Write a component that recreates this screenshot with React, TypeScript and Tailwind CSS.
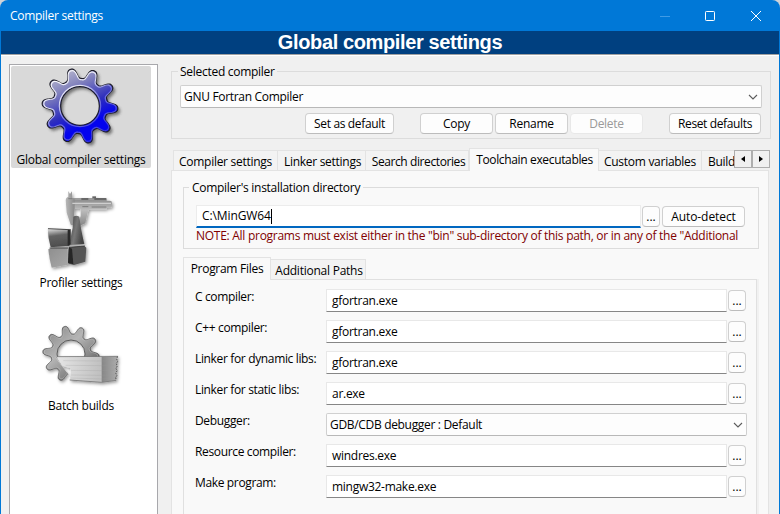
import type { ReactNode } from 'react';

function gearPath(cx: number, cy: number, inner: number, outer: number, startDeg: number, teeth = 10) {
  const mid = (inner + outer) / 2;
  const amp = (outer - inner) / 2;
  const points: string[] = [];
  for (let i = 0; i < 360; i += 1) {
    const wave = Math.cos(((i - startDeg) * teeth * Math.PI) / 180);
    const r = mid + (amp * Math.tanh(1.6 * (wave - 0.18))) / Math.tanh(1.4);
    const a = (i * Math.PI) / 180;
    points.push(`${(cx + r * Math.sin(a)).toFixed(1)} ${(cy - r * Math.cos(a)).toFixed(1)}`);
  }
  return `M${points.join('L')}Z`;
}

function circlePath(cx: number, cy: number, r: number) {
  return `M${cx - r} ${cy}a${r} ${r} 0 1 0 ${2 * r} 0a${r} ${r} 0 1 0 ${-2 * r} 0Z`;
}

function BlueGear() {
  const gear = gearPath(165, 138, 84, 114, -14) + circlePath(165, 138, 58);
  const bevel = gearPath(165, 138, 80, 109, -14) + circlePath(165, 138, 62);
  return (
    <svg className="h-[82px] w-[84px]" viewBox="42 18 252 246">
      <defs>
        <linearGradient id="blue" x1="0.2" y1="0.05" x2="0.62" y2="0.9">
          <stop offset="0" stopColor="#b9b9cf" />
          <stop offset="0.25" stopColor="#8585bd" />
          <stop offset="0.6" stopColor="#2e2ebd" />
          <stop offset="0.85" stopColor="#0303ee" />
        </linearGradient>
        <linearGradient id="bevel" x1="0.15" y1="0" x2="0.75" y2="0.9">
          <stop offset="0" stopColor="#ffffff" />
          <stop offset="0.35" stopColor="#e4e4f4" />
          <stop offset="0.6" stopColor="#7878dc" />
          <stop offset="1" stopColor="#3a3ad8" />
        </linearGradient>
        <filter id="soft" x="-10%" y="-10%" width="125%" height="125%">
          <feGaussianBlur stdDeviation="4" />
        </filter>
      </defs>
      <path d={gear} transform="translate(7 8)" fill="#333" opacity="0.6" fillRule="evenodd" filter="url(#soft)" />
      <path d={gear} fill="url(#blue)" stroke="#1d1d28" strokeWidth="3.5" fillRule="evenodd" />
      <path d={bevel} fill="none" stroke="url(#bevel)" strokeWidth="3.5" />
    </svg>
  );
}

function Caliper() {
  return (
    <svg className="h-[90px] w-[90px]" viewBox="3 15 270 270">
      <defs>
        <linearGradient id="steel" x1="0" y1="0" x2="0" y2="1">
          <stop offset="0" stopColor="#8c8c8c" />
          <stop offset="0.4" stopColor="#bdbdbd" />
          <stop offset="1" stopColor="#858585" />
        </linearGradient>
        <linearGradient id="jaw" x1="0" y1="0" x2="1" y2="0">
          <stop offset="0" stopColor="#b8b8b8" />
          <stop offset="1" stopColor="#7a7a7a" />
        </linearGradient>
        <linearGradient id="cubeTop" x1="0.2" y1="0" x2="0.35" y2="1">
          <stop offset="0" stopColor="#e4e4e4" />
          <stop offset="0.4" stopColor="#636363" />
          <stop offset="1" stopColor="#4c4c4c" />
        </linearGradient>
        <linearGradient id="cubeLow" x1="0" y1="0" x2="1" y2="1">
          <stop offset="0" stopColor="#8e8e8e" />
          <stop offset="1" stopColor="#a8a8a8" />
        </linearGradient>
        <linearGradient id="wedge" x1="0" y1="0" x2="1" y2="0.4">
          <stop offset="0" stopColor="#444" />
          <stop offset="0.5" stopColor="#777" />
          <stop offset="1" stopColor="#444" />
        </linearGradient>
        <filter id="shade" x="-15%" y="-15%" width="140%" height="140%">
          <feDropShadow dx="4" dy="5" stdDeviation="4" floodColor="#000" floodOpacity="0.4" />
        </filter>
      </defs>
      <g filter="url(#shade)">
        <path d="M112 58H215V62H225Q231 62 231 69V77Q231 83 225 83H214V88H161L157 102L151 130L133 138L128 134L137 108V86H112Z" fill="url(#steel)" />
        <path d="M100 33l5 9 6-8v24h8v27l-2 22 11 26-6 5-15-4-12-36-3-38q0-8 8-10Z" fill="url(#jaw)" />
        <path d="M100 56h114" stroke="#777" strokeWidth="2.5" />
        <path d="M139 57h21M178 57h36" stroke="#5a5a5a" strokeWidth="4" />
        <path d="M112 70h116" stroke="#cfcfcf" strokeWidth="4" />
        <path d="M142 80h18M170 81h44" stroke="#7a7a7a" strokeWidth="3" fill="none" />
        <path d="M172 49h11v6h-11Z" fill="#666" />
        <path d="M115 110q9-5 18 0 4 36 15 82l-43 3q2-28 8-52Z" fill="url(#wedge)" />
        <path d="M38 145l65 3 1 49-57 5Q39 177 38 145Z" fill="url(#cubeTop)" />
        <path d="M98 151l9-4v46l-9 5Z" fill="#292929" />
        <path d="M40 208l8-4 50-1 1 51-49 9q-7-23-10-55Z" fill="url(#cubeLow)" />
        <path d="M102 202l46-4 6 5-3 42-34 10-17-4Z" fill="#555" />
        <path d="M101 202l10 4 4 47-16-5Z" fill="#252525" />
        <path d="M39 146l65 3M44 204h55M102 202l48-4" stroke="#333" strokeWidth="2.5" fill="none" />
      </g>
    </svg>
  );
}

function BatchGear() {
  const gear = gearPath(108, 117, 61, 85, -13) + circlePath(108, 117, 42);
  return (
    <svg className="h-[75px] w-[90px]" viewBox="3 15 270 225">
      <defs>
        <linearGradient id="grayGear" x1="0.1" y1="0.1" x2="0.8" y2="0.9">
          <stop offset="0" stopColor="#8d8d8d" />
          <stop offset="0.4" stopColor="#b5b5b5" />
          <stop offset="0.75" stopColor="#858585" />
          <stop offset="1" stopColor="#555" />
        </linearGradient>
        <linearGradient id="paper" x1="0" y1="0" x2="1" y2="0.1">
          <stop offset="0" stopColor="#e6e6e6" />
          <stop offset="1" stopColor="#c0c0c0" />
        </linearGradient>
        <linearGradient id="side" x1="0" y1="0" x2="1" y2="0">
          <stop offset="0" stopColor="#868686" />
          <stop offset="1" stopColor="#adadad" />
        </linearGradient>
        <clipPath id="gearClip">
          <path d="M0 0H273V126H60L78 150L108 188V240H0Z" />
        </clipPath>
        <filter id="shadow" x="-15%" y="-15%" width="140%" height="140%">
          <feDropShadow dx="4" dy="5" stdDeviation="4" floodColor="#000" floodOpacity="0.4" />
        </filter>
      </defs>
      <g filter="url(#shadow)">
        <g clipPath="url(#gearClip)">
          <path d={gear} fill="url(#grayGear)" stroke="#4b4b4b" strokeWidth="2.5" fillRule="evenodd" />
          <path d={gearPath(108, 117, 57, 80, -13)} fill="none" stroke="#cfcfcf" strokeWidth="2" opacity="0.6" />
        </g>
        <path d="M66 125H202V202L104 194L107 174V160L83 152Z" fill="url(#paper)" />
        <path d="M200 125L248 124L245 132L248 139L244 146L247 153L243 160L247 167L242 174L246 181L242 188L244 195L200 202Z" fill="url(#side)" />
        <path d="M66 125L248 124M104 195L200 202L244 196" fill="none" stroke="#777" strokeWidth="2.5" />
        <path d="M85 137L200 138L245 137M92 151L200 152L245 151M108 166L200 167L245 165M108 180L200 181L244 179M108 189L200 192L242 188" fill="none" stroke="#999" strokeWidth="1.8" opacity="0.4" />
        <path d="M248 124L245 132L248 139L244 146L247 153L243 160L247 167L242 174L246 181L242 188L244 195" fill="none" stroke="#505050" strokeWidth="3" strokeDasharray="5 3" />
      </g>
    </svg>
  );
}

function Chevron() {
  return (
    <svg className="h-[6px] w-[10px]" viewBox="0 0 10 6" fill="none">
      <path d="M1 1l4 4 4-4" stroke="#5c5c5c" strokeWidth="1.1" />
    </svg>
  );
}

function Button({ className, children }: { className: string; children: ReactNode }) {
  return (
    <button
      className={`flex shrink-0 items-center justify-center whitespace-nowrap rounded-[4px] border border-[#d0d0d0] border-b-[#bcbcbc] bg-[#fdfdfd] ${className}`}
    >
      {children}
    </button>
  );
}

function Combo({ value, className }: { value: string; className: string }) {
  return (
    <div
      className={`flex items-center justify-between rounded-[2px] border border-[#d0d0d0] border-b-[#b8b8b8] bg-[#fdfdfd] pl-[3px] pr-[3px] ${className}`}
    >
      <span>{value}</span>
      <Chevron />
    </div>
  );
}

function Tab({ className, children }: { className: string; children: ReactNode }) {
  return (
    <div
      className={`flex shrink-0 items-center justify-center overflow-hidden whitespace-nowrap border-r border-t border-[#e3e3e3] ${className}`}
    >
      {children}
    </div>
  );
}

const programs = [
  { label: 'C compiler:', value: 'gfortran.exe' },
  { label: 'C++ compiler:', value: 'gfortran.exe' },
  { label: 'Linker for dynamic libs:', value: 'gfortran.exe' },
  { label: 'Linker for static libs:', value: 'ar.exe' },
  { label: 'Debugger:', value: 'GDB/CDB debugger : Default', combo: true },
  { label: 'Resource compiler:', value: 'windres.exe' },
  { label: 'Make program:', value: 'mingw32-make.exe' },
];

export default function App() {
  return (
    <div className="h-[514px] w-[780px] overflow-hidden bg-[#cfd3d8]">
      <div className="flex h-full flex-col overflow-hidden rounded-t-[8px] bg-[#0078d7] px-px font-['Open_Sans','Noto_Sans',sans-serif] text-[12px] leading-4 tracking-[-0.28px] text-black">
        <div className="flex h-[31px] shrink-0 items-center justify-between pl-[9px] pr-[17px] text-white">
          <span className="pt-px">Compiler settings</span>
          <div className="flex items-center">
            <svg className="h-[12px] w-[12px]" viewBox="0 0 12 12">
              <path d="M1 6.5h10" stroke="#3f9be6" />
            </svg>
            <svg className="ml-[33px] h-[12px] w-[12px]" viewBox="0 0 12 12" fill="none">
              <rect x="1.5" y="1.5" width="9" height="9" rx="0.8" stroke="#fff" />
            </svg>
            <svg className="ml-[34px] h-[12px] w-[12px]" viewBox="0 0 12 12">
              <path d="M1 1l10 10M11 1L1 11" stroke="#fff" />
            </svg>
          </div>
        </div>
        <div className="flex h-[23px] shrink-0 items-center justify-center bg-[#004080] font-['Liberation_Sans',Arial,sans-serif] text-[20px] font-bold leading-[23px] tracking-[-0.38px] text-white">
          Global compiler settings
        </div>
        <div className="flex min-h-0 flex-1 border-t border-[#a0a0a0] bg-[#f0f0f0] shadow-[inset_0_1px_0_#fff]">
          <div className="ml-2 mt-[9px] flex w-[149px] shrink-0 flex-col border border-b-0 border-[#a8a8ac] bg-white pl-px pt-px">
            <div className="flex h-[102px] w-[140px] flex-col items-center rounded-[2px] bg-[#d9d9d9] tracking-[-0.25px]">
              <BlueGear />
              <span className="mt-[4px] whitespace-nowrap">Global compiler settings</span>
            </div>
            <div className="mt-[17px] flex w-[140px] flex-col items-center">
              <Caliper />
              <span>Profiler settings</span>
            </div>
            <div className="mt-[29px] flex w-[140px] flex-col items-center tracking-[-0.23px]">
              <BatchGear />
              <span className="mt-[3px]">Batch builds</span>
            </div>
          </div>

          <div className="ml-[13px] mr-[9px] mt-[8px] flex min-w-0 flex-1 flex-col">
            <fieldset className="h-[76px] border border-[#dcdcdc] px-[8px]">
              <legend className="-ml-[2px] px-[2px] pt-px">Selected compiler</legend>
              <Combo className="mt-[5px] h-[23px] w-[582px] tracking-[-0.31px]" value="GNU Fortran Compiler" />
              <div className="mt-[5px] flex pl-[125px]">
                <Button className="h-[21px] w-[89px] tracking-[-0.34px]">Set as default</Button>
                <Button className="ml-[26px] h-[21px] w-[73px]">Copy</Button>
                <Button className="ml-[2px] h-[21px] w-[73px]">Rename</Button>
                <Button className="ml-[2px] h-[21px] w-[73px] border-[#e8e8e8] border-b-[#e8e8e8] bg-[#f8f8f8] text-[#9a9a9a]">
                  Delete
                </Button>
                <Button className="ml-[26px] h-[21px] w-[92px] tracking-[-0.37px]">Reset defaults</Button>
              </div>
            </fieldset>

            <div className="mt-[9px] flex h-[22px] shrink-0 items-end pl-[2px]">
              <Tab className="h-[20px] w-[105px] border-l bg-[#f3f3f3] pt-[2px]">Compiler settings</Tab>
              <Tab className="h-[20px] w-[88px] bg-[#f3f3f3] pl-[2px] pt-[2px]">Linker settings</Tab>
              <Tab className="h-[20px] w-[103px] bg-[#f3f3f3] pl-[3px] pt-[2px] tracking-[-0.4px]">Search directories</Tab>
              <Tab className="z-10 -mb-px h-[23px] w-[130px] border-l bg-[#f9f9f9] pb-[2px] pl-px pt-px tracking-[-0.35px]">
                Toolchain executables
              </Tab>
              <Tab className="h-[20px] w-[103px] bg-[#f3f3f3] pt-[2px]">Custom variables</Tab>
              <Tab className="h-[20px] w-[32px] justify-start border-r-0 bg-[#f3f3f3] pl-[6px] pt-[2px]"><span>Build</span></Tab>
              <div className="flex h-[20px] items-start">
                <div className="flex h-[18px] w-[18px] items-center justify-center border border-[#adadad] bg-[#f0f0f0]">
                  <svg className="h-[6px] w-[4px]" viewBox="0 0 4 6">
                    <path d="M4 0v6L0 3Z" />
                  </svg>
                </div>
                <div className="flex h-[18px] w-[18px] items-center justify-center border border-[#adadad] bg-[#f0f0f0]">
                  <svg className="h-[6px] w-[4px]" viewBox="0 0 4 6">
                    <path d="M0 0v6l4-3Z" />
                  </svg>
                </div>
              </div>
            </div>

            <div className="mr-px flex min-h-0 flex-1 flex-col border border-b-0 border-[#e3e3e3] bg-[#f9f9f9] pl-[11px] pr-[9px]">
              <fieldset className="mt-[8px] h-[70px] shrink-0 border border-[#dcdcdc] pl-[12px] pr-[13px]">
                <legend className="-ml-[7px] px-[3px] pt-px">Compiler's installation directory</legend>
                <div className="mt-[9px] flex items-center">
                  <div className="flex h-[23px] w-[445px] shrink-0 items-center border border-b-2 border-[#ececec] border-b-[#0067c0] bg-white pl-[5px] tracking-[-0.1px]">
                    <span>C:\MinGW64</span>
                    <span className="h-[15px] w-px bg-black" />
                  </div>
                  <Button className="ml-px h-[21px] w-[18px] tracking-normal">...</Button>
                  <Button className="ml-[2px] h-[21px] w-[83px] tracking-[-0.08px]">Auto-detect</Button>
                </div>
                <div className="whitespace-nowrap tracking-[-0.275px] text-[#800000]">
                  NOTE: All programs must exist either in the "bin" sub-directory of this path, or in any of the "Additional
                </div>
              </fieldset>

              <div className="mt-[7px] flex h-[23px] shrink-0 items-end">
                <Tab className="z-10 -mb-px h-[23px] w-[88px] border-l bg-[#f9f9f9] pb-[2px] pt-px">Program Files</Tab>
                <Tab className="h-[20px] w-[95px] bg-[#f3f3f3] pl-[2px] pt-[2px] tracking-[-0.24px]">Additional Paths</Tab>
              </div>
              <div className="mr-[2px] flex min-h-0 flex-1 flex-col gap-[8px] border border-b-0 border-[#e0e0e0] pl-[11px] pt-[9px] shadow-[2px_0_0_#f1f1f1]">
                {programs.map((row) => (
                  <div key={row.label} className="flex h-[23px] shrink-0">
                    <span className="w-[131px] shrink-0 whitespace-nowrap tracking-[-0.35px]">{row.label}</span>
                    {row.combo ? (
                      <Combo className="h-[23px] w-[421px] pt-px tracking-[-0.32px]" value={row.value} />
                    ) : (
                      <>
                        <div className="flex h-[23px] w-[401px] items-center border border-[#e8e8e8] border-b-[#868686] bg-white pl-[5px]">
                          {row.value}
                        </div>
                        <Button className="ml-px mt-px h-[21px] w-[18px] tracking-normal">...</Button>
                      </>
                    )}
                  </div>
                ))}
              </div>
            </div>
          </div>
        </div>
      </div>
    </div>
  );
}
